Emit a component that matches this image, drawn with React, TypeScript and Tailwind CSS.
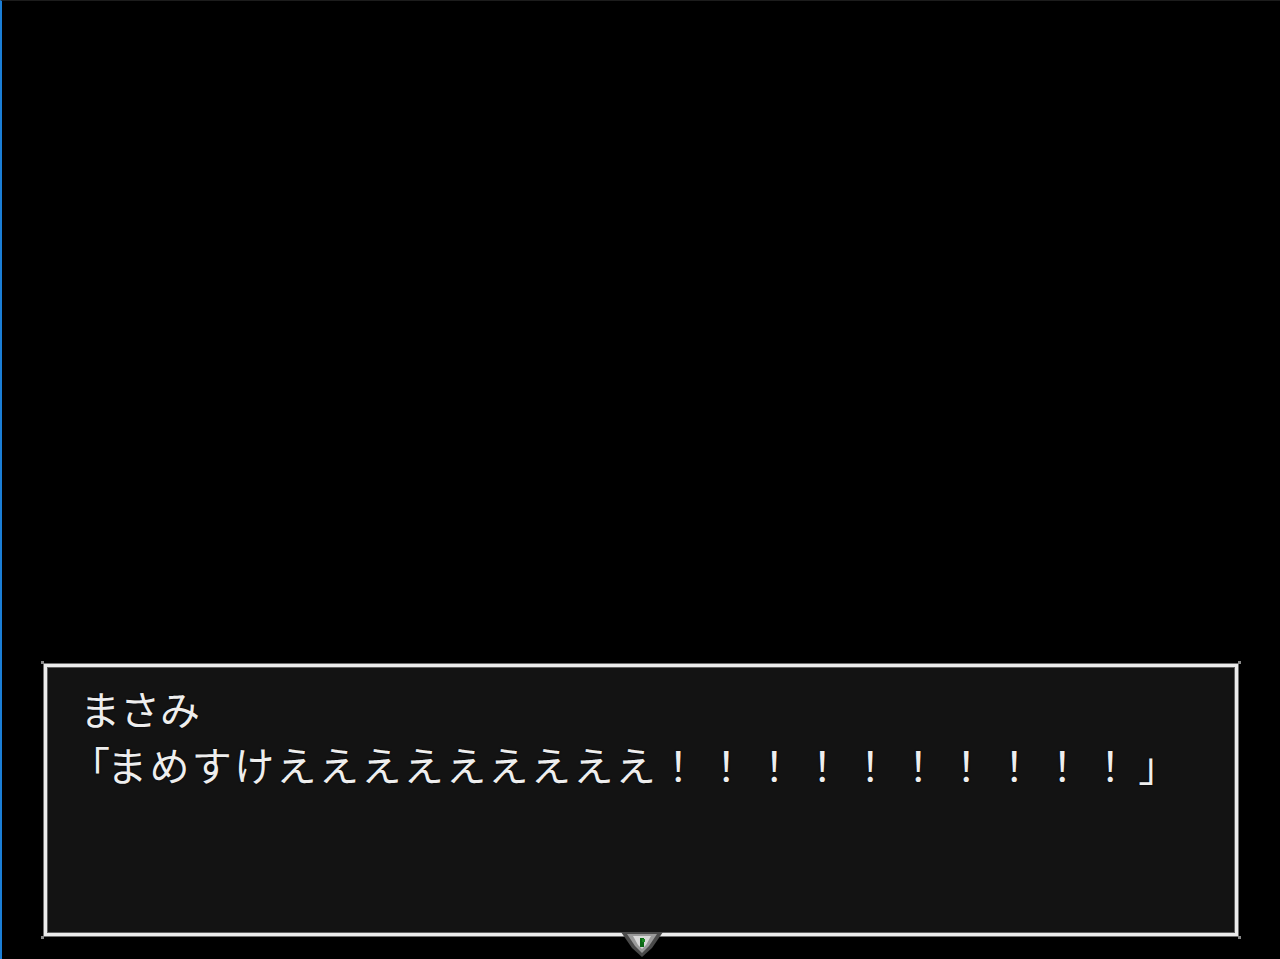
import React from "react";

const jp = { fontFamily: '"Noto Sans CJK JP", "Noto Sans", sans-serif' };

function CornerDot({ className }: { className: string }) {
  return <div className={`absolute w-[3px] h-[3px] bg-[#8a8a8a] ${className}`} />;
}

function NextArrow() {
  // little "press to continue" cursor sitting on the bottom frame
  return (
    <svg
      className="absolute left-[573px] top-[266px]"
      width="50"
      height="28"
      viewBox="0 0 50 28"
    >
      <rect x="0" y="0" width="50" height="2" fill="#131313" />
      <polygon points="4,2 46,2 35,18 25,27 15,18" fill="#4a4a4a" />
      <polygon points="10,4 40,4 32,16 25,23 18,16" fill="#9a9a9a" />
      <polygon points="16,6 34,6 29,15 25,19 21,15" fill="#d8d8d8" />
      <rect x="23" y="8" width="4" height="9" fill="#0d6a16" />
      <rect x="25" y="9" width="3" height="3" fill="#1e8a26" />
    </svg>
  );
}

export default function App() {
  return (
    <div className="w-[1280px] h-[959px] bg-black flex flex-col border-l-2 border-[#1b7ed6] border-t border-t-[#1c1c1c] overflow-hidden">
      <div className="flex-1" />
      {/* message window */}
      <div className="relative ml-[42px] mb-[23px] w-[1194px] h-[272px]">
        <CornerDot className="-left-[3px] -top-[3px]" />
        <CornerDot className="-right-[3px] -top-[3px]" />
        <CornerDot className="-left-[3px] -bottom-[3px]" />
        <CornerDot className="-right-[3px] -bottom-[3px]" />
        <div className="w-full h-full bg-[#131313] border-[3px] border-[#ececec] shadow-[0_0_0_1px_#707070,inset_0_0_0_1px_#606060] pl-[33px] pt-[13px]">
          <div
            style={jp}
            className="text-[40px] leading-[56px] text-[#eeeeee] [text-shadow:0_0_2px_#000]"
          >
            <div>まさみ</div>
            <div className="flex -ml-[10px]">
              <span className="-mr-[3px]">「</span>
              <span className="tracking-[2.4px]">まめすけえええええええええ</span>
              <span className="tracking-[8px]">！！！！！！！！！！</span>
              <span>」</span>
            </div>
          </div>
        </div>
        <NextArrow />
      </div>
    </div>
  );
}
